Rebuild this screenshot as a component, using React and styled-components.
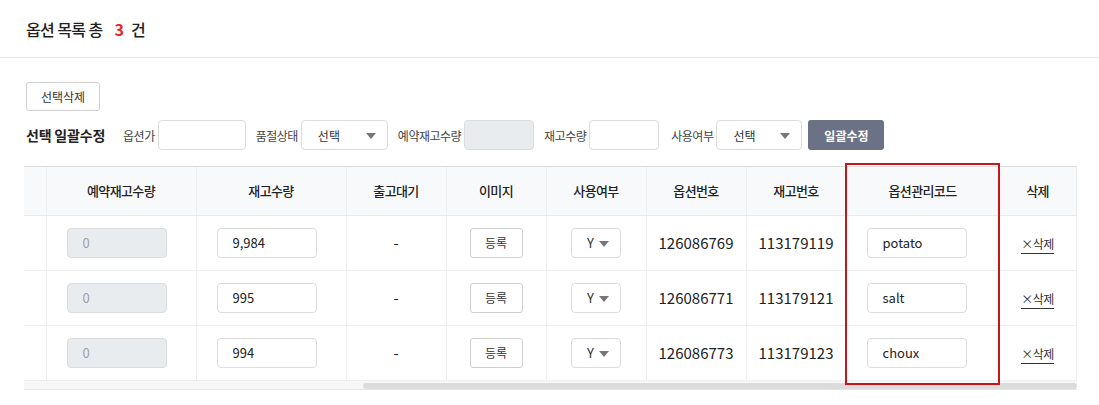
import React, { useLayoutEffect, useRef, useState } from "react";
import styled, { createGlobalStyle } from "styled-components";

const GlobalStyle = createGlobalStyle`
  * { box-sizing: border-box; }
  body {
    margin: 0;
    background: #fff;
    color: #222;
    font-family: "Noto Sans CJK KR", "Noto Sans", sans-serif;
  }
`;

const TitleBar = styled.div`
  height: 58px;
  display: flex;
  align-items: center;
  padding: 0 26px;
  border-bottom: 1px solid #e6e6e6;
`;

const Title = styled.h2`
  margin: 0;
  font-size: 16px;
  font-weight: 500;
  letter-spacing: -0.6px;
  color: #222;
`;

const Count = styled.em`
  font-style: normal;
  font-weight: 700;
  color: #e3262a;
  margin: 0 7px 0 12px;
  letter-spacing: 0;
`;

const Content = styled.div`
  padding: 24px 22px 0 24px;
`;

const Toolbar = styled.div`
  padding-left: 2px;
`;

const Button = styled.button`
  height: ${(p) => (p.$small ? "30px" : "29px")};
  padding: 0 ${(p) => (p.$small ? "0" : "14px")};
  width: ${(p) => (p.$small ? "53px" : "auto")};
  border: 1px solid #cfcfcf;
  border-radius: 3px;
  background: #fff;
  color: #333;
  font-family: inherit;
  font-size: 12px;
  letter-spacing: 0;
  cursor: pointer;
`;

const PrimaryButton = styled.button`
  height: 30px;
  width: 76px;
  margin-left: 6px;
  border: 0;
  border-radius: 3px;
  background: #6b7285;
  color: #fff;
  font-family: inherit;
  font-size: 12px;
  font-weight: 700;
  letter-spacing: 0;
`;

const BulkRow = styled.div`
  margin-top: 9px;
  padding-left: 2px;
  display: flex;
  align-items: center;
  height: 30px;
`;

const BulkTitle = styled.strong`
  font-size: 14px;
  font-weight: 700;
  letter-spacing: -0.2px;
  margin-right: 18px;
`;

const Field = styled.label`
  display: flex;
  align-items: center;
  margin-right: ${(p) => (p.$gap === undefined ? 10 : p.$gap)}px;
`;

const FieldLabel = styled.span`
  font-size: 12px;
  letter-spacing: -0.5px;
  color: #444;
  margin-right: 3px;
`;

const TextInput = styled.input`
  display: block;
  width: ${(p) => p.$w || 100}px;
  height: 30px;
  padding: 0 15px;
  border: 1px solid #dcdcdc;
  border-radius: 4px;
  background: ${(p) => (p.disabled ? "#e9ecef" : "#fff")};
  color: ${(p) => (p.disabled ? "#a0a0a0" : "#222")};
  font-family: inherit;
  font-size: 13px;
  outline: none;
`;

const SelectWrap = styled.div`
  position: relative;
  width: ${(p) => p.$w}px;
  height: 30px;
  &::after {
    content: "";
    position: absolute;
    right: ${(p) => p.$caret || 12}px;
    top: 13px;
    border-left: 5px solid transparent;
    border-right: 5px solid transparent;
    border-top: 6px solid #777;
    pointer-events: none;
  }
`;

const Select = styled.select`
  appearance: none;
  width: 100%;
  height: 100%;
  padding: 0 0 0 ${(p) => p.$pad || 16}px;
  border: 1px solid #dcdcdc;
  border-radius: 4px;
  background: #fff;
  color: #333;
  font-family: inherit;
  font-size: ${(p) => p.$fs || 12}px;
  outline: none;
`;

const TableWrap = styled.div`
  position: relative;
  margin-top: 16px;
`;

const TableScroll = styled.div`
  overflow-x: hidden;
  border-top: 1px solid #dcdcdc;
`;

const Table = styled.table`
  width: 1553px;
  table-layout: fixed;
  border-collapse: collapse;
`;

const Th = styled.th`
  height: 48px;
  padding: 0;
  background: #f8f9fb;
  border-right: 1px solid #eceef0;
  border-bottom: 1px solid #e6e8ea;
  font-size: 13px;
  font-weight: 500;
  letter-spacing: -0.6px;
  color: #222;
`;

const Td = styled.td`
  height: 55px;
  padding: 0 ${(p) => (p.$left ? "20px" : "0")};
  text-align: ${(p) => (p.$left ? "left" : "center")};
  border-right: 1px solid #eceef0;
  border-bottom: 1px solid #eceef0;
  font-size: 15px;
  color: #222;
  & > div,
  & > button {
    margin: 0 auto;
  }
`;

const DeleteLink = styled.a`
  display: inline-block;
  font-size: 12px;
  letter-spacing: -0.5px;
  color: #333;
  padding-bottom: 1px;
  border-bottom: 1px solid #333;
  line-height: 16px;
  cursor: pointer;
`;

const ScrollTrack = styled.div`
  height: 9px;
  padding-top: 2px;
  background: #f7f7f7;
  border-bottom: 1px solid #e8e8e8;
`;

const ScrollThumb = styled.div`
  height: 6px;
  border-radius: 3px;
  background: #dcdcdc;
`;

const Highlight = styled.div`
  position: absolute;
  left: 821px;
  top: -3px;
  width: 155px;
  height: 222px;
  border: 2px solid #c4161c;
  pointer-events: none;
`;

const columns = [
  { key: "check", title: "", width: 50 },
  { key: "name", title: "옵션명", width: 150 },
  { key: "price", title: "옵션가", width: 150 },
  { key: "soldout", title: "품절상태", width: 173 },
  { key: "reserved", title: "예약재고수량", width: 150 },
  { key: "stock", title: "재고수량", width: 150 },
  { key: "waiting", title: "출고대기", width: 100 },
  { key: "image", title: "이미지", width: 100 },
  { key: "use", title: "사용여부", width: 100 },
  { key: "optionNo", title: "옵션번호", width: 100 },
  { key: "stockNo", title: "재고번호", width: 100 },
  { key: "code", title: "옵션관리코드", width: 153 },
  { key: "delete", title: "삭제", width: 77 },
];

const rows = [
  { name: "감자", stock: "9,984", optionNo: "126086769", stockNo: "113179119", code: "potato" },
  { name: "소금", stock: "995", optionNo: "126086771", stockNo: "113179121", code: "salt" },
  { name: "슈", stock: "994", optionNo: "126086773", stockNo: "113179123", code: "choux" },
];

const App = () => {
  const scrollRef = useRef(null);
  const [thumb, setThumb] = useState({ width: 0, left: 0 });

  useLayoutEffect(() => {
    const el = scrollRef.current;
    if (!el) return;
    el.scrollLeft = el.scrollWidth;
    const ratio = el.clientWidth / el.scrollWidth;
    setThumb({
      width: el.clientWidth * ratio,
      left: (el.scrollLeft / el.scrollWidth) * el.clientWidth,
    });
  }, []);

  return (
    <>
      <GlobalStyle />
      <TitleBar>
        <Title>
          옵션 목록 총<Count>3</Count>건
        </Title>
      </TitleBar>
      <Content>
        <Toolbar>
          <Button>선택삭제</Button>
        </Toolbar>
        <BulkRow>
          <BulkTitle>선택 일괄수정</BulkTitle>
          <Field>
            <FieldLabel>옵션가</FieldLabel>
            <TextInput $w={88} />
          </Field>
          <Field>
            <FieldLabel>품절상태</FieldLabel>
            <SelectWrap $w={87}>
              <Select>
                <option>선택</option>
              </Select>
            </SelectWrap>
          </Field>
          <Field>
            <FieldLabel>예약재고수량</FieldLabel>
            <TextInput $w={70} disabled />
          </Field>
          <Field $gap={12}>
            <FieldLabel>재고수량</FieldLabel>
            <TextInput $w={70} />
          </Field>
          <Field $gap={0}>
            <FieldLabel>사용여부</FieldLabel>
            <SelectWrap $w={86}>
              <Select>
                <option>선택</option>
              </Select>
            </SelectWrap>
          </Field>
          <PrimaryButton>일괄수정</PrimaryButton>
        </BulkRow>

        <TableWrap>
          <TableScroll ref={scrollRef}>
            <Table>
              <colgroup>
                {columns.map((c) => (
                  <col key={c.key} style={{ width: c.width }} />
                ))}
              </colgroup>
              <thead>
                <tr>
                  {columns.map((c) => (
                    <Th key={c.key}>{c.title}</Th>
                  ))}
                </tr>
              </thead>
              <tbody>
                {rows.map((r) => (
                  <tr key={r.optionNo}>
                    <Td>
                      <input type="checkbox" />
                    </Td>
                    <Td>{r.name}</Td>
                    <Td>0</Td>
                    <Td>-</Td>
                    <Td $left>
                      <TextInput disabled value="0" readOnly />
                    </Td>
                    <Td $left>
                      <TextInput defaultValue={r.stock} />
                    </Td>
                    <Td>-</Td>
                    <Td>
                      <Button $small>등록</Button>
                    </Td>
                    <Td>
                      <SelectWrap $w={50} $caret={12}>
                        <Select $pad={15} $fs={13}>
                          <option>Y</option>
                          <option>N</option>
                        </Select>
                      </SelectWrap>
                    </Td>
                    <Td>{r.optionNo}</Td>
                    <Td>{r.stockNo}</Td>
                    <Td $left>
                      <TextInput defaultValue={r.code} />
                    </Td>
                    <Td>
                      <DeleteLink>×삭제</DeleteLink>
                    </Td>
                  </tr>
                ))}
              </tbody>
            </Table>
          </TableScroll>
          <ScrollTrack>
            <ScrollThumb style={{ width: thumb.width, marginLeft: thumb.left }} />
          </ScrollTrack>
          <Highlight />
        </TableWrap>
      </Content>
    </>
  );
};

export default App;
